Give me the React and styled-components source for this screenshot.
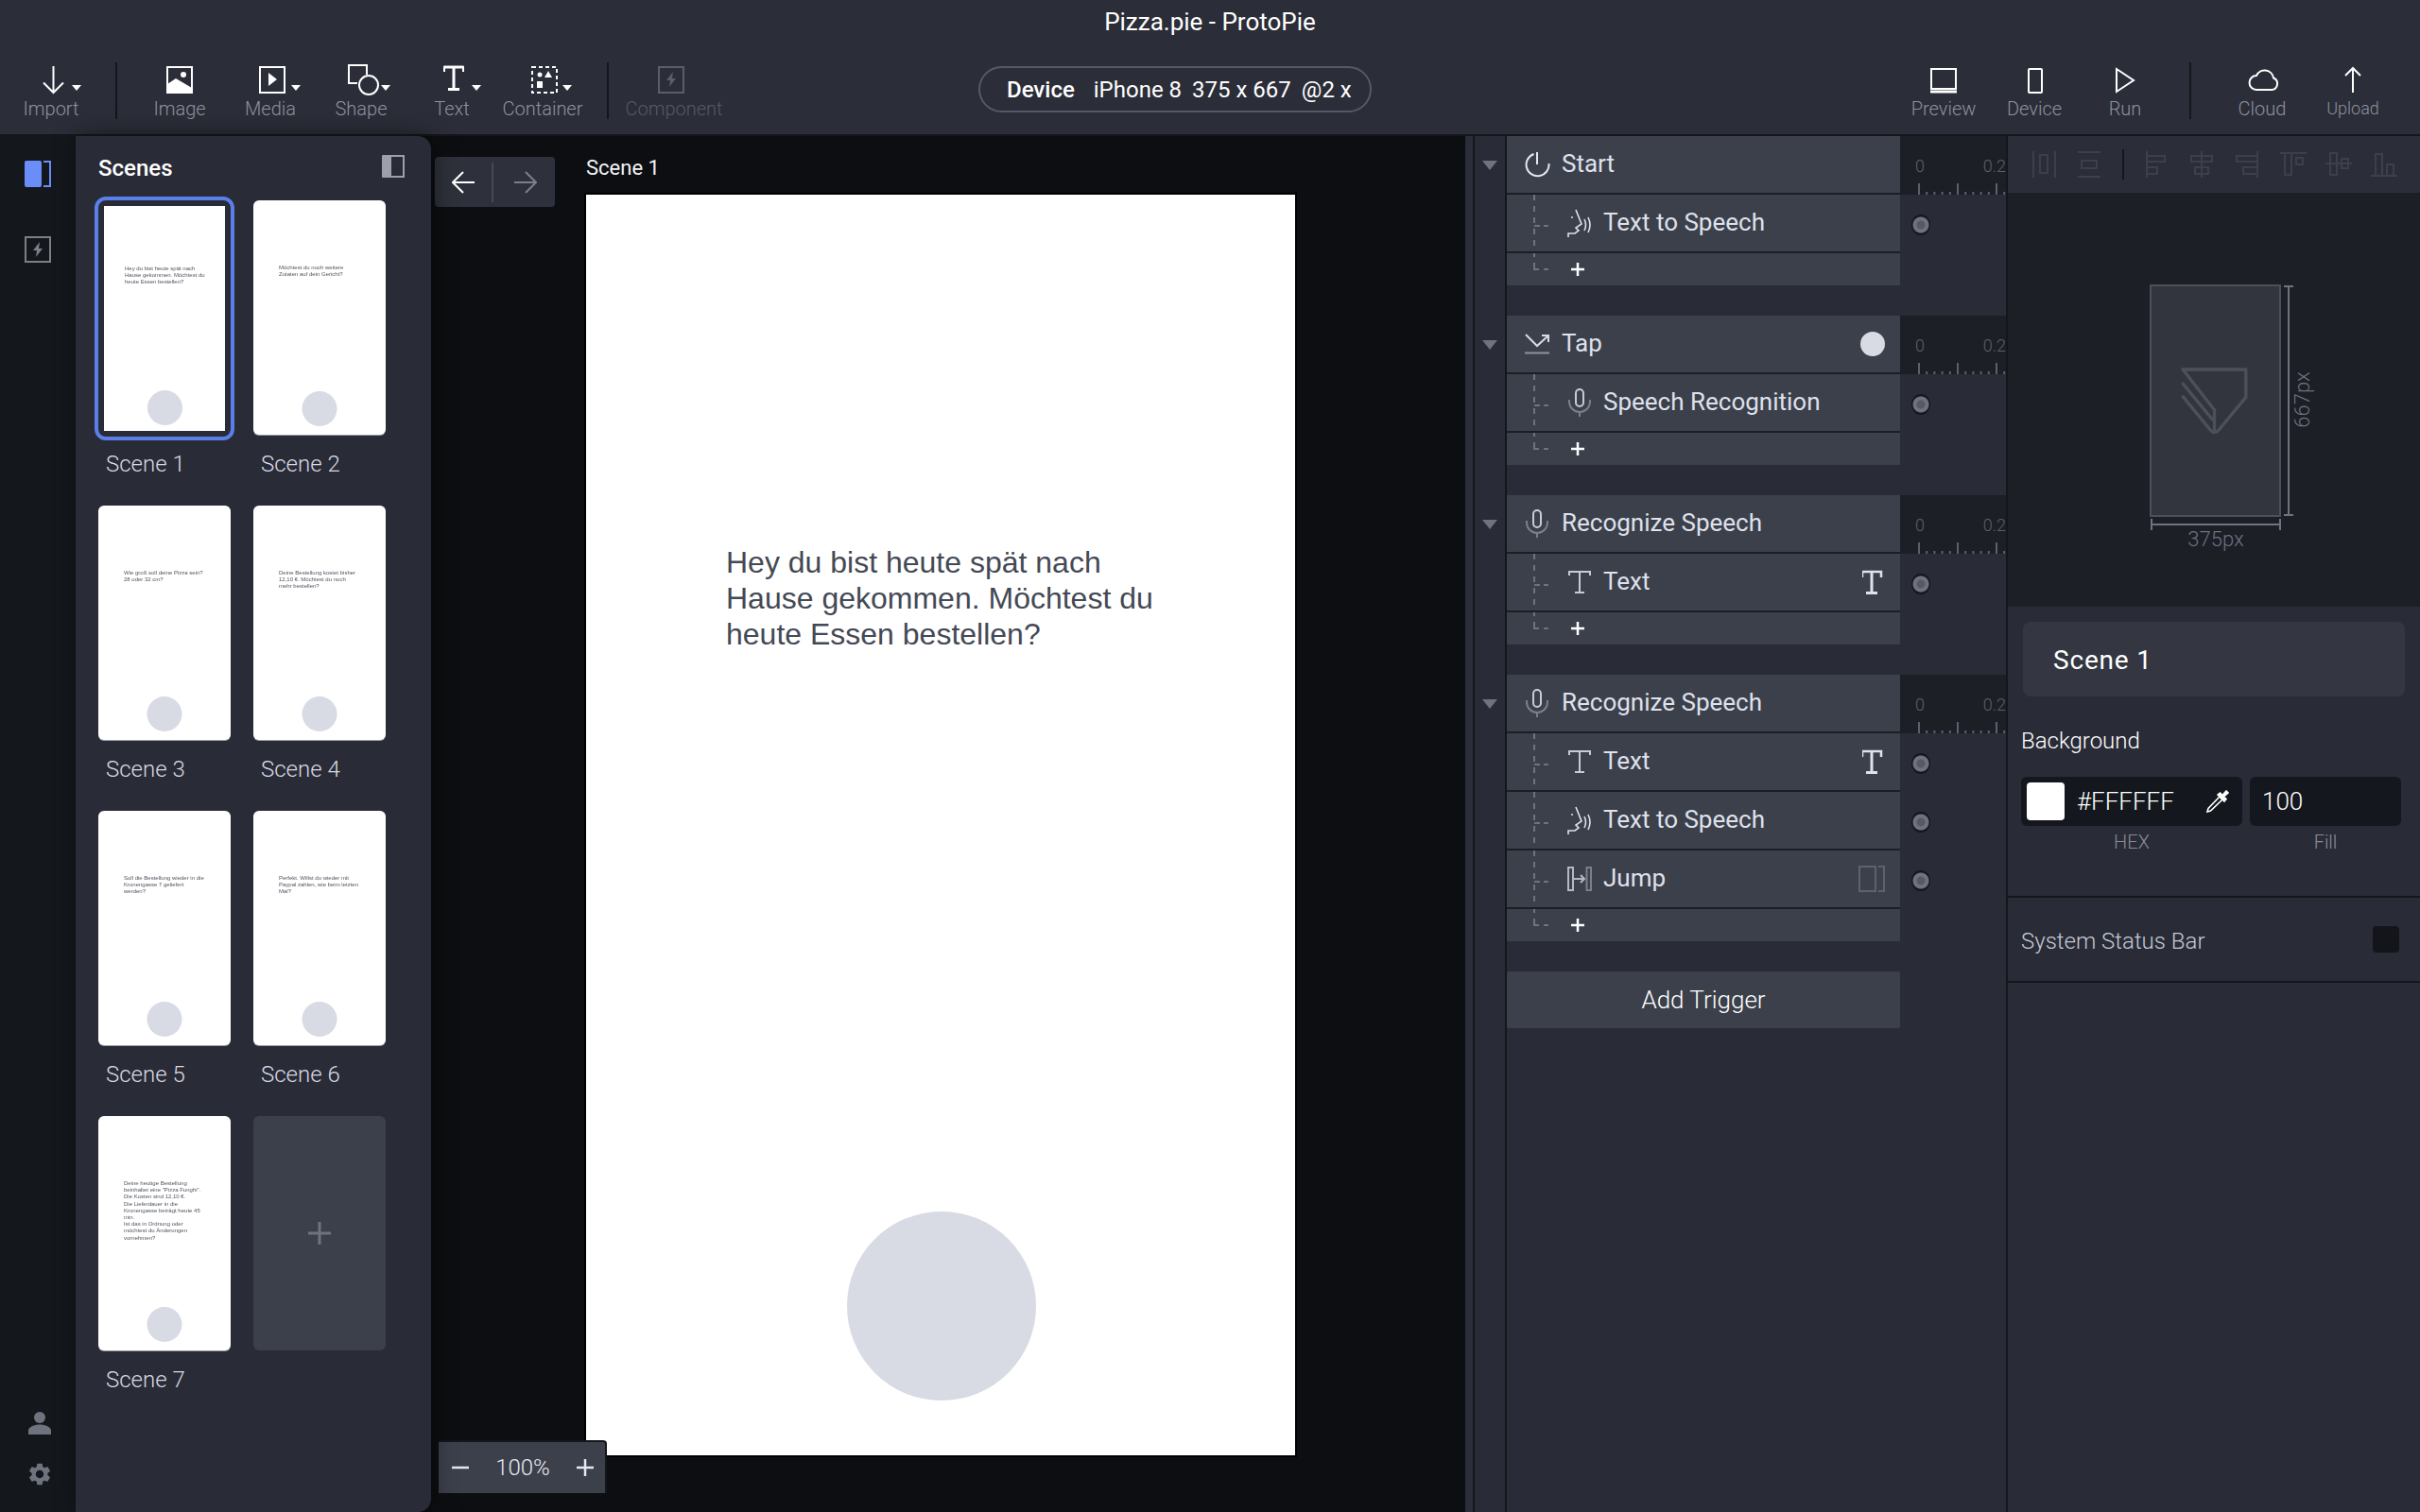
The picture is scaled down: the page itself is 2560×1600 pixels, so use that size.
import React from "react";
import styled, { createGlobalStyle } from "styled-components";
import { MdSettings } from "react-icons/md";

const C = {
  bar: "#2b2d38",
  panel: "#292b36",
  line: "#14161b",
  row: "#3b404b",
  rowLine: "#1c1e25",
  deep: "#1c1f26",
  text: "#dfe1eb",
  label: "#8e929e",
};

const Global = createGlobalStyle`
  html, body { margin: 0; padding: 0; background: #0d0e11; }
  #root { width: 2560px; height: 1600px; overflow: hidden; }
  * { box-sizing: border-box; }
  body { font-family: Roboto, "Liberation Sans", sans-serif; color: #fff; }
  svg { display: block; flex: none; }
`;

const Page = styled.div`
  width: 2560px;
  height: 1600px;
  display: flex;
  flex-direction: column;
`;

/* ---------- top bar ---------- */
const TopBar = styled.header`
  height: 144px;
  flex: none;
  background: ${C.bar};
  border-bottom: 2px solid ${C.line};
  display: flex;
  flex-direction: column;
`;
const Title = styled.div`
  height: 46px;
  line-height: 46px;
  text-align: center;
  font-size: 26px;
  color: #fff;
`;
const Toolbar = styled.div`
  margin-top: 20px;
  height: 62px;
  padding-left: 6px;
  padding-right: 23px;
  display: flex;
  align-items: flex-start;
`;
const ToolItem = styled.div`
  width: ${(p) => (p.$wide ? 102 : 96)}px;
  padding-top: 2px;
  flex: none;
  display: flex;
  flex-direction: column;
  align-items: center;
`;
const ToolLabel = styled.span`
  height: 24px;
  line-height: 22px;
  font-size: ${(p) => p.$size || 20}px;
  font-weight: 300;
  white-space: nowrap;
  color: ${(p) => (p.$dim ? "#565964" : C.label)};
`;
const ToolDivider = styled.div`
  width: 2px;
  height: 60px;
  flex: none;
  background: ${C.line};
  margin: 0 ${(p) => p.$right ?? 18}px 0 20px;
`;
const DevicePill = styled.div`
  margin: 4px auto 0 271px;
  width: 416px;
  height: 49px;
  flex: none;
  border: 2px solid #555a66;
  border-radius: 25px;
  padding-left: 28px;
  display: flex;
  align-items: center;
  gap: 11px;
  font-size: 24px;
  white-space: nowrap;
`;
const PillStrong = styled.b`
  font-weight: 500;
  margin-right: 9px;
`;

/* ---------- body ---------- */
const Body = styled.div`
  flex: 1;
  min-height: 0;
  display: flex;
`;
const Rail = styled.nav`
  width: 80px;
  flex: none;
  background: #14171c;
  display: flex;
  flex-direction: column;
  align-items: center;
  padding: 26px 0 26px;
`;
const RailSpacer = styled.div`
  flex: 1;
`;
const RailGap = styled.div`
  height: ${(p) => p.$h}px;
  flex: none;
`;
const RailFoot = styled.div`
  margin-left: 3px;
`;
const ScenesPanel = styled.aside`
  width: 376px;
  flex: none;
  background: ${C.panel};
  border-radius: 0 14px 14px 0;
  box-shadow: 2px 0 26px rgba(0, 0, 0, 0.45);
  padding: 0 24px;
  position: relative;
  z-index: 3;
`;
const ScenesHead = styled.div`
  height: 68px;
  display: flex;
  align-items: flex-start;
  justify-content: space-between;
  padding: 20px 4px 0 0;
  font-size: 24px;
  font-weight: 500;
  line-height: 28px;
`;
const SceneGrid = styled.div`
  display: grid;
  grid-template-columns: 140px 140px;
  column-gap: 24px;
  row-gap: 27px;
`;
const SceneCard = styled.div`
  display: flex;
  flex-direction: column;
`;
const ThumbFrame = styled.div`
  height: 248px;
  width: 140px;
  ${(p) =>
    p.$selected
      ? `margin: -4px; width: 148px; height: 258px; border: 4px solid #5b7fe9; border-radius: 12px; padding: 6px; margin-bottom: -6px;`
      : ""}
`;
const Thumb = styled.div`
  width: 100%;
  height: 100%;
  background: #fff;
  border-radius: ${(p) => (p.$selected ? 0 : 6)}px;
  box-shadow: ${(p) => (p.$selected ? "none" : "0 1px 0 #9a9ca6")};
  display: flex;
  flex-direction: column;
  padding: ${(p) => (p.$selected ? "62.5px 0 6px 22px" : "68px 0 9.5px 27px")};
`;
const ThumbText = styled.div`
  font-family: "Liberation Sans", Arial, sans-serif;
  font-size: 6px;
  line-height: 7.2px;
  color: #50555f;
  white-space: nowrap;
  filter: blur(0.35px);
`;
const ThumbDot = styled.div`
  margin-top: auto;
  width: 37px;
  height: 37px;
  border-radius: 50%;
  background: #d8dae4;
  align-self: center;
  transform: translateX(${(p) => (p.$selected ? -11 : -13.5)}px);
`;
const SceneLabel = styled.div`
  margin-top: 14px;
  height: 34px;
  line-height: 34px;
  padding-left: 8px;
  font-size: 24px;
  font-weight: 300;
  color: #d8dae4;
`;
const AddTile = styled.div`
  width: 140px;
  height: 248px;
  background: ${C.row};
  border-radius: 6px;
  display: flex;
  align-items: center;
  justify-content: center;
`;

/* ---------- canvas ---------- */
const Canvas = styled.main`
  flex: 1;
  min-width: 0;
  background: #0d0e11;
  display: flex;
  position: relative;
  padding-left: 4px;
`;
const NavBox = styled.div`
  margin-top: 22px;
  width: 127px;
  height: 53px;
  flex: none;
  background: #2e313b;
  border-radius: 4px;
  display: flex;
  align-items: center;
  padding-left: 18px;
`;
const NavDivider = styled.div`
  width: 2px;
  height: 42px;
  background: #454954;
  margin: 0 22px 0 18px;
`;
const Stage = styled.div`
  margin-left: 33px;
  display: flex;
  flex-direction: column;
`;
const StageLabel = styled.div`
  height: 62px;
  line-height: 68px;
  font-size: 22px;
  color: #f2f3f7;
`;
const Phone = styled.div`
  width: 750px;
  height: 1334px;
  background: #fff;
  box-shadow: 0 0 0 2px #000;
  padding: 0 0 58px 148px;
  display: flex;
  flex-direction: column;
`;
const PhoneText = styled.div`
  margin-top: 370px;
  font-family: "Liberation Sans", Arial, sans-serif;
  font-size: 32px;
  line-height: 38px;
  color: #444954;
  white-space: nowrap;
`;
const PhoneDot = styled.div`
  margin-top: auto;
  margin-left: 128px;
  width: 200px;
  height: 200px;
  border-radius: 50%;
  background: #d8dae4;
`;
const ZoomBox = styled.div`
  position: absolute;
  left: 8px;
  top: 1380px;
  width: 178px;
  height: 56px;
  background: ${C.row};
  border: 2px solid ${C.line};
  border-left: 0;
  border-bottom: 0;
  border-radius: 0 4px 0 0;
  display: flex;
  align-items: center;
  justify-content: space-between;
  padding: 0 12px 0 14px;
  font-size: 24px;
  font-weight: 300;
  color: #e6e8f0;
`;

/* ---------- interactions ---------- */
const Interactions = styled.section`
  width: 574px;
  flex: none;
  background: ${C.panel};
  display: flex;
`;
const Strip = styled.div`
  width: 10px;
  flex: none;
  background: ${C.bar};
  border-right: 2px solid ${C.line};
`;
const List = styled.div`
  margin-left: 32px;
  width: 532px;
  flex: none;
  border-left: 2px solid ${C.line};
  border-right: 2px solid ${C.line};
`;
const Group = styled.div`
  margin-bottom: 32px;
  position: relative;
`;
const Caret = styled.div`
  position: absolute;
  left: -26px;
  top: 26px;
  width: 0;
  height: 0;
  border-left: 8px solid transparent;
  border-right: 8px solid transparent;
  border-top: 10px solid #6e737e;
`;
const Row = styled.div`
  display: flex;
  height: ${(p) => (p.$plus ? 34 : 62)}px;
`;
const RowMain = styled.div`
  width: 416px;
  flex: none;
  background: ${C.row};
  border-bottom: ${(p) => (p.$plus ? "0" : `2px solid ${C.rowLine}`)};
  display: flex;
  align-items: center;
  font-size: 26px;
  color: ${C.text};
  padding-left: ${(p) => (p.$head ? 18 : 28)}px;
  white-space: nowrap;
`;
const RowText = styled.span`
  margin-top: -3px;
`;
const HeadIcon = styled.div`
  width: 28px;
  flex: none;
  display: flex;
  justify-content: center;
  margin-right: 12px;
`;
const RespIcon = styled.div`
  width: 28px;
  flex: none;
  margin: 0 11px 0 17px;
  display: flex;
  justify-content: center;
`;
const PlusSlot = styled.div`
  margin-left: 22px;
`;
const RightSlot = styled.div`
  margin-left: auto;
  padding-right: 16px;
`;
const TimeCell = styled.div`
  width: 112px;
  flex: none;
  overflow: hidden;
  display: flex;
  flex-direction: column;
  justify-content: center;
  padding-left: 13px;
  background: ${(p) => (p.$head ? C.deep : "transparent")};
`;
const RulerCell = styled(TimeCell)`
  padding: 0;
  justify-content: space-between;
`;
const RulerLabels = styled.div`
  padding: 20px 0 0 16px;
  display: flex;
  justify-content: space-between;
  font-size: 18px;
  line-height: 24px;
  font-weight: 300;
  color: #5c606c;
`;
const Dot = styled.div`
  width: 18px;
  height: 20px;
  border-radius: 50%;
  margin-top: 2px;
  background: radial-gradient(circle, #555a66 0 4px, #6e737e 5px 8px, #14161b 9px);
  box-shadow: 0 0 0 1px #14161b;
`;
const AddTrigger = styled.div`
  width: 416px;
  height: 60px;
  background: ${C.row};
  border-radius: 2px;
  display: flex;
  align-items: center;
  justify-content: center;
  font-size: 26px;
  font-weight: 300;
  color: #fff;
`;

/* ---------- properties ---------- */
const Props = styled.aside`
  width: 436px;
  flex: none;
  background: ${C.panel};
  display: flex;
  flex-direction: column;
`;
const AlignBar = styled.div`
  height: 60px;
  background: ${C.bar};
  display: flex;
  align-items: center;
  padding-left: 24px;
  gap: 20px;
`;
const AlignDivider = styled.div`
  width: 2px;
  height: 32px;
  background: ${C.line};
  margin: 0 1px;
`;
const PreviewArea = styled.div`
  height: 438px;
  background: ${C.deep};
  display: flex;
  align-items: center;
  justify-content: center;
  padding-top: 2px;
`;
const PreviewPhone = styled.div`
  width: 139px;
  height: 246px;
  margin-left: 3px;
  background: #32353e;
  border: 2px solid #4c505b;
  position: relative;
  display: flex;
  align-items: center;
  justify-content: center;
`;
const MeasureV = styled.div`
  position: absolute;
  left: 140px;
  top: -1px;
  width: 10px;
  height: 244px;
`;
const MeasureH = styled.div`
  position: absolute;
  left: -1px;
  top: 246px;
  width: 138px;
  height: 12px;
`;
const MeasureText = styled.span`
  position: absolute;
  font-size: 22px;
  font-weight: 300;
  line-height: 24px;
  color: #6e7280;
  white-space: nowrap;
  ${(p) =>
    p.$vertical
      ? `left: 160px; top: 108px; transform: translate(-50%, 0) rotate(-90deg);`
      : `left: 68px; top: 256px; transform: translateX(-50%);`}
`;
const PropsBody = styled.div`
  padding: 16px 0 0 14px;
  height: 308px;
  border-bottom: 2px solid ${C.line};
`;
const SceneField = styled.div`
  margin-left: 2px;
  width: 404px;
  height: 79px;
  background: #343741;
  border-radius: 8px;
  display: flex;
  align-items: center;
  padding: 2px 0 0 32px;
  font-size: 28px;
  letter-spacing: 0.8px;
`;
const BgLabel = styled.div`
  margin: 35px 0 0 0;
  height: 24px;
  line-height: 24px;
  font-size: 24px;
  font-weight: 300;
`;
const ColorRow = styled.div`
  margin-top: 26px;
  display: grid;
  grid-template-columns: 234px 160px;
  column-gap: 8px;
  row-gap: 5px;
`;
const InputBox = styled.div`
  height: 52px;
  background: #14171e;
  border-radius: 6px;
  display: flex;
  align-items: center;
  padding: 0 14px 0 ${(p) => p.$pl}px;
  font-size: 26px;
  font-weight: 300;
`;
const Swatch = styled.div`
  width: 40px;
  height: 40px;
  background: #fff;
  border-radius: 4px;
  margin-right: 13px;
`;
const Picker = styled.div`
  margin-left: auto;
`;
const Caption = styled.div`
  text-align: center;
  font-size: 20px;
  font-weight: 300;
  line-height: 24px;
  color: #888c98;
`;
const StatusRow = styled.div`
  height: 90px;
  border-bottom: 2px solid ${C.line};
  display: flex;
  align-items: center;
  justify-content: space-between;
  padding: 0 22px 0 14px;
  font-size: 24px;
  font-weight: 300;
  color: #c4c8d4;
`;
const StatusText = styled.span`
  margin-top: 3px;
`;
const StatusSwatch = styled.div`
  width: 28px;
  height: 28px;
  background: #14151a;
  border-radius: 4px;
`;

/* ---------- icons ---------- */
const Svg = ({ w = 96, h = 36, c = "#fff", sw = 2, children, vb }) => (
  <svg width={w} height={h} viewBox={vb || `0 0 ${w} ${h}`} fill="none" stroke={c} strokeWidth={sw}>
    {children}
  </svg>
);
const Car = ({ x }) => <polygon points={`${x},22 ${x + 10},22 ${x + 5},28`} fill="#fff" stroke="none" />;

const IconImport = () => (
  <Svg>
    <path d="M50.5 2V30M40 19.5L50.5 30L61 19.5" />
    <Car x={70} />
  </Svg>
);
const IconImage = () => (
  <Svg>
    <rect x="35" y="3" width="26" height="27" />
    <circle cx="52" cy="11" r="3" fill="#fff" stroke="none" />
    <polygon points="35,21 44,15 61,25 61,30 35,30" fill="#fff" stroke="none" />
  </Svg>
);
const IconMedia = () => (
  <Svg>
    <rect x="37" y="3" width="26" height="27" />
    <polygon points="46,9 55,16 46,23" fill="#fff" stroke="none" />
    <Car x={70} />
  </Svg>
);
const IconShape = () => (
  <Svg>
    <path d="M44 20H35V1H54V11" />
    <circle cx="56" cy="22" r="10" />
    <Car x={69} />
  </Svg>
);
const IconText = () => (
  <Svg>
    <path d="M50 3V26M44 26.500H56" strokeWidth="3" />
    <path d="M39.500 3H60.500" strokeWidth="3" />
    <path d="M40 2V8M60 2V8" strokeWidth="2" />
    <Car x={69} />
  </Svg>
);
const IconContainer = () => (
  <Svg>
    <rect x="37" y="3" width="26" height="27" strokeDasharray="4 3" />
    <circle cx="45" cy="11" r="2.500" fill="#fff" stroke="none" />
    <polygon points="54,7 58,14 50,14" fill="#fff" stroke="none" />
    <rect x="42" y="18" width="6" height="7" fill="#fff" stroke="none" />
    <Car x={69} />
  </Svg>
);
const Bolt = ({ cx, cy, c }) => (
  <polygon
    points={`${cx + 2},${cy - 8} ${cx - 5},${cy + 1} ${cx - 1},${cy + 1} ${cx - 2},${cy + 8} ${cx + 5},${cy - 1} ${cx + 1},${cy - 1}`}
    fill={c}
    stroke="none"
  />
);
const IconComponent = () => (
  <Svg c="#5b5e69">
    <rect x="32" y="3" width="26" height="27" />
    <Bolt cx={45} cy={16} c="#5b5e69" />
  </Svg>
);
const IconPreview = () => (
  <Svg>
    <rect x="35" y="5" width="26" height="21" />
    <path d="M34 29H62" strokeWidth="3" />
  </Svg>
);
const IconDevice = () => (
  <Svg>
    <rect x="42" y="5" width="14" height="25" rx="1" />
  </Svg>
);
const IconRun = () => (
  <Svg>
    <path d="M39 5L57 17L39 29Z" />
  </Svg>
);
const IconCloud = () => (
  <Svg>
    <path d="M42 27H58A6.500 6.500 0 0 0 60 14.500A9.500 9.500 0 0 0 42 12A7.500 7.500 0 0 0 42 27Z" />
  </Svg>
);
const IconUpload = () => (
  <Svg>
    <path d="M48 4V30M40 12L48 4L56 12" />
  </Svg>
);

const IconRailPanel = () => (
  <Svg w={28} h={28} c="#6a8df8">
    <rect x="0" y="0" width="18" height="28" rx="2" fill="#6a8df8" stroke="none" />
    <path d="M20 1H27V27H20" />
  </Svg>
);
const IconRailBolt = () => (
  <Svg w={28} h={28} c="#7b7f8a">
    <rect x="1" y="1" width="26" height="26" />
    <Bolt cx={14} cy={14} c="#7b7f8a" />
  </Svg>
);
const IconUser = () => (
  <Svg w={24} h={24} c="#6e737e">
    <circle cx="12" cy="6" r="6" fill="#6e737e" stroke="none" />
    <path d="M0 24V20C0 16 6 13.500 12 13.500C18 13.500 24 16 24 20V24Z" fill="#6e737e" stroke="none" />
  </Svg>
);
const IconPanelToggle = () => (
  <Svg w={24} h={24} c="#9ba0ab">
    <rect x="0" y="0" width="10" height="24" rx="1" fill="#9ba0ab" stroke="none" />
    <rect x="9" y="1" width="14" height="22" />
  </Svg>
);
const IconPlus = ({ s = 14, c = "#fff", sw = 2.5 }) => (
  <Svg w={s} h={s} c={c} sw={sw}>
    <path d={`M${s / 2} 0V${s}M0 ${s / 2}H${s}`} />
  </Svg>
);
const IconMinus = () => (
  <Svg w={18} h={18} c="#e6e8f0" sw={2.5}>
    <path d="M0 9H18" />
  </Svg>
);
const IconBack = ({ c = "#fff", flip }) => (
  <Svg w={24} h={24} c={c}>
    <path d={flip ? "M0 12H23M12 1L23 12L12 23" : "M24 12H1M12 1L1 12L12 23"} />
  </Svg>
);
const IconStart = () => (
  <Svg w={27} h={28} c="#e6e8f0">
    <path d="M13 1V14" />
    <path d="M9.500 3A12 12 0 1 0 25.500 13" />
  </Svg>
);
const IconTap = () => (
  <Svg w={26} h={22} c="#d8dae4">
    <path d="M1 1L13 13L25 2M18 2H25V9" />
    <path d="M0 20.500H26" stroke="#8e929e" />
  </Svg>
);
const IconMic = () => (
  <Svg w={24} h={30} c="#c8cbd6">
    <rect x="8" y="1" width="8" height="18" rx="4" />
    <path d="M1 12V14A11 11 0 0 0 23 14V12M12 25V30" stroke="#7b7f8a" />
  </Svg>
);
const IconTts = () => (
  <Svg w={26} h={30} c="#dfe1eb" sw={1.6}>
    <path d="M9 1L15 16L9 20L12 23L8 26H1V30" />
    <circle cx="5" cy="9" r="1" fill="#dfe1eb" stroke="none" />
    <path d="M18 11Q21 17 18 23M22 9Q26 17 22 25" />
  </Svg>
);
const IconTextThin = () => (
  <Svg w={24} h={24} c="#c8cbd6">
    <path d="M1 5V1H23V5M12 1V23M7 23H17" />
  </Svg>
);
const IconTextBold = () => (
  <Svg w={24} h={26} c="#dfe1eb">
    <path d="M10 2V24M4 24.500H16" strokeWidth="3" />
    <path d="M0 8V2H20V8" strokeWidth="2.500" />
  </Svg>
);
const IconJump = () => (
  <Svg w={26} h={26} c="#b5b8c4" sw={2}>
    <rect x="1" y="1" width="5" height="24" />
    <rect x="20.500" y="1" width="4.500" height="24" stroke="#7b7f8a" />
    <path d="M6 13H18M14 9L18 13L14 17" />
  </Svg>
);
const IconJumpTarget = () => (
  <Svg w={28} h={28} c="#5e626d">
    <rect x="1" y="1" width="17" height="26" />
    <path d="M21 1H27V27H21" />
  </Svg>
);
const Tree = ({ plus }) =>
  plus ? (
    <Svg w={18} h={34} c="#6e737e">
      <path d="M1 0V4M1 10V17H6M11 17H16" />
    </Svg>
  ) : (
    <Svg w={18} h={60} c="#6e737e">
      <path d="M1 0V60" strokeDasharray="6 6" />
      <path d="M1 33H16" strokeDasharray="6 4" />
    </Svg>
  );
const Ruler = () => {
  const ticks = [];
  for (let i = 0; i < 12; i++) {
    const x = 20 + i * 8.2;
    ticks.push(<path key={i} d={`M${x} ${i % 5 === 0 ? 0 : 9}V12`} />);
  }
  return (
    <Svg w={112} h={12} c="#5c606c">
      {ticks}
    </Svg>
  );
};
const a = "#3c404a";
const AlignIcon = ({ children }) => (
  <Svg w={28} h={28} c={a}>
    {children}
  </Svg>
);
const alignIcons = [
  <path key="1" d="M3 0V28M26 0V28M10 4H18V23H10Z" />,
  <path key="2" d="M2 1H26M2 27H26M6 10H22V18H6Z" />,
  <path key="3" d="M3 0V28M3 5H22V11H3M3 17H14V24H3" />,
  <path key="4" d="M13 0V28M2 5H24V11H2ZM6 17H20V24H6Z" />,
  <path key="5" d="M24 0V28M24 5H2V11H24M24 17H9V24H24" />,
  <path key="6" d="M0 2H28M5 2V25H12V2M17 7H24V14H17Z" />,
  <path key="7" d="M0 13H28M5 2H12V25H5ZM17 8H24V18H17Z" />,
  <path key="8" d="M0 26H28M5 26V3H12V26M17 26V14H24V26" />,
];
const Logo = () => (
  <Svg w={77} h={75} vb="560 740 230 225" c="#4c505b" sw={10}>
    <path d="M572 752H772V840L685 945Q672 958 660 945L572 838" strokeLinejoin="round" strokeLinecap="round" />
    <path d="M572 752L672 880V950M572 797L665 910" strokeLinejoin="round" strokeLinecap="round" />
  </Svg>
);
const MeasureVLine = () => (
  <Svg w={10} h={244} c="#6e737e">
    <path d="M0 1H10M0 243H10M5 1V243" />
  </Svg>
);
const MeasureHLine = () => (
  <Svg w={138} h={12} c="#6e737e">
    <path d="M1 0V12M137 0V12M1 6H137" />
  </Svg>
);
const Dropper = () => (
  <Svg w={24} h={24} c="#fff" sw={1.6}>
    <path d="M14 7L2 19.500L1 23L4.500 22L17 10Z" />
    <path d="M12 5L19 12L21 9.500L18.500 7L23 3L21 1L17 5.500L14.500 3Z" fill="#fff" />
  </Svg>
);

/* ---------- data ---------- */
const scenes = [
  { n: 1, t: ["Hey du bist heute spät nach", "Hause gekommen. Möchtest du", "heute Essen bestellen?"] },
  { n: 2, t: ["Möchtest du noch weitere", "Zutaten auf dein Gericht?"] },
  { n: 3, t: ["Wie groß soll deine Pizza sein?", "28 oder 32 cm?"] },
  { n: 4, t: ["Deine Bestellung kostet bisher", "12,10 €. Möchtest du noch", "mehr bestellen?"] },
  { n: 5, t: ["Soll die Bestellung wieder in die", "Kronengasse 7 geliefert", "werden?"] },
  { n: 6, t: ["Perfekt. Willst du wieder mit", "Paypal zahlen, wie beim letzten", "Mal?"] },
  {
    n: 7,
    t: [
      "Deine heutige Bestellung",
      'beinhaltet eine "Pizza Funghi".',
      "Die Kosten sind 12,10 €.",
      "Die Lieferdauer in die",
      "Kronengasse beträgt heute 45",
      "min.",
      "Ist das in Ordnung oder",
      "möchtest du Änderungen",
      "vornehmen?",
    ],
  },
];

const groups = [
  {
    icon: <IconStart />,
    name: "Start",
    rows: [{ icon: <IconTts />, name: "Text to Speech" }],
  },
  {
    icon: <IconTap />,
    name: "Tap",
    mark: true,
    rows: [{ icon: <IconMic />, name: "Speech Recognition" }],
  },
  {
    icon: <IconMic />,
    name: "Recognize Speech",
    rows: [{ icon: <IconTextThin />, name: "Text", right: <IconTextBold /> }],
  },
  {
    icon: <IconMic />,
    name: "Recognize Speech",
    rows: [
      { icon: <IconTextThin />, name: "Text", right: <IconTextBold /> },
      { icon: <IconTts />, name: "Text to Speech" },
      { icon: <IconJump />, name: "Jump", right: <IconJumpTarget /> },
    ],
  },
];

const TapMark = styled.div`
  width: 26px;
  height: 26px;
  border-radius: 50%;
  background: #d8dae4;
`;

export default function App() {
  return (
    <Page>
      <Global />
      <TopBar>
        <Title>Pizza.pie - ProtoPie</Title>
        <Toolbar>
          <ToolItem>
            <IconImport />
            <ToolLabel>Import</ToolLabel>
          </ToolItem>
          <ToolDivider />
          <ToolItem>
            <IconImage />
            <ToolLabel>Image</ToolLabel>
          </ToolItem>
          <ToolItem>
            <IconMedia />
            <ToolLabel>Media</ToolLabel>
          </ToolItem>
          <ToolItem>
            <IconShape />
            <ToolLabel>Shape</ToolLabel>
          </ToolItem>
          <ToolItem>
            <IconText />
            <ToolLabel>Text</ToolLabel>
          </ToolItem>
          <ToolItem>
            <IconContainer />
            <ToolLabel>Container</ToolLabel>
          </ToolItem>
          <ToolDivider />
          <ToolItem $wide>
            <IconComponent />
            <ToolLabel $dim>Component</ToolLabel>
          </ToolItem>
          <DevicePill>
            <PillStrong>Device</PillStrong>
            <span>iPhone 8</span>
            <span>375 x 667</span>
            <span>@2 x</span>
          </DevicePill>
          <ToolItem>
            <IconPreview />
            <ToolLabel>Preview</ToolLabel>
          </ToolItem>
          <ToolItem>
            <IconDevice />
            <ToolLabel>Device</ToolLabel>
          </ToolItem>
          <ToolItem>
            <IconRun />
            <ToolLabel>Run</ToolLabel>
          </ToolItem>
          <ToolDivider $right={27} />
          <ToolItem>
            <IconCloud />
            <ToolLabel>Cloud</ToolLabel>
          </ToolItem>
          <ToolItem>
            <IconUpload />
            <ToolLabel $size={18}>Upload</ToolLabel>
          </ToolItem>
        </Toolbar>
      </TopBar>

      <Body>
        <Rail>
          <IconRailPanel />
          <RailGap $h={52} />
          <IconRailBolt />
          <RailSpacer />
          <RailFoot>
            <IconUser />
          </RailFoot>
          <RailGap $h={28} />
          <RailFoot>
            <MdSettings size={28} color="#6e737e" />
          </RailFoot>
        </Rail>

        <ScenesPanel>
          <ScenesHead>
            Scenes
            <IconPanelToggle />
          </ScenesHead>
          <SceneGrid>
            {scenes.map((s) => {
              const selected = s.n === 1;
              return (
                <SceneCard key={s.n}>
                  <ThumbFrame $selected={selected}>
                    <Thumb $selected={selected}>
                      <ThumbText>
                        {s.t.map((l) => (
                          <div key={l}>{l}</div>
                        ))}
                      </ThumbText>
                      <ThumbDot $selected={selected} />
                    </Thumb>
                  </ThumbFrame>
                  <SceneLabel>Scene {s.n}</SceneLabel>
                </SceneCard>
              );
            })}
            <AddTile>
              <IconPlus s={24} c="#6e737e" sw={3} />
            </AddTile>
          </SceneGrid>
        </ScenesPanel>

        <Canvas>
          <NavBox>
            <IconBack />
            <NavDivider />
            <IconBack flip c="#7b7f8a" />
          </NavBox>
          <Stage>
            <StageLabel>Scene 1</StageLabel>
            <Phone>
              <PhoneText>
                Hey du bist heute spät nach
                <br />
                Hause gekommen. Möchtest du
                <br />
                heute Essen bestellen?
              </PhoneText>
              <PhoneDot />
            </Phone>
          </Stage>
          <ZoomBox>
            <IconMinus />
            <span>100%</span>
            <IconPlus s={18} c="#e6e8f0" sw={2.5} />
          </ZoomBox>
        </Canvas>

        <Interactions>
          <Strip />
          <List>
            {groups.map((g, i) => (
              <Group key={i}>
                <Caret />
                <Row>
                  <RowMain $head>
                    <HeadIcon>{g.icon}</HeadIcon>
                    <RowText>{g.name}</RowText>
                    {g.mark && (
                      <RightSlot>
                        <TapMark />
                      </RightSlot>
                    )}
                  </RowMain>
                  <RulerCell $head>
                    <RulerLabels>
                      <span>0</span>
                      <span>0.2</span>
                    </RulerLabels>
                    <Ruler />
                  </RulerCell>
                </Row>
                {g.rows.map((r, j) => (
                  <Row key={j}>
                    <RowMain>
                      <Tree />
                      <RespIcon>{r.icon}</RespIcon>
                      <RowText>{r.name}</RowText>
                      {r.right && <RightSlot>{r.right}</RightSlot>}
                    </RowMain>
                    <TimeCell>
                      <Dot />
                    </TimeCell>
                  </Row>
                ))}
                <Row $plus>
                  <RowMain $plus>
                    <Tree plus />
                    <PlusSlot>
                      <IconPlus />
                    </PlusSlot>
                  </RowMain>
                </Row>
              </Group>
            ))}
            <AddTrigger>Add Trigger</AddTrigger>
          </List>
        </Interactions>

        <Props>
          <AlignBar>
            <AlignIcon>{alignIcons[0]}</AlignIcon>
            <AlignIcon>{alignIcons[1]}</AlignIcon>
            <AlignDivider />
            {alignIcons.slice(2).map((ic, i) => (
              <AlignIcon key={i}>{ic}</AlignIcon>
            ))}
          </AlignBar>
          <PreviewArea>
            <PreviewPhone>
              <Logo />
              <MeasureV>
                <MeasureVLine />
              </MeasureV>
              <MeasureH>
                <MeasureHLine />
              </MeasureH>
              <MeasureText $vertical>667px</MeasureText>
              <MeasureText>375px</MeasureText>
            </PreviewPhone>
          </PreviewArea>
          <PropsBody>
            <SceneField>Scene 1</SceneField>
            <BgLabel>Background</BgLabel>
            <ColorRow>
              <InputBox $pl={6}>
                <Swatch />
                #FFFFFF
                <Picker>
                  <Dropper />
                </Picker>
              </InputBox>
              <InputBox $pl={13}>100</InputBox>
              <Caption>HEX</Caption>
              <Caption>Fill</Caption>
            </ColorRow>
          </PropsBody>
          <StatusRow>
            <StatusText>System Status Bar</StatusText>
            <StatusSwatch />
          </StatusRow>
        </Props>
      </Body>
    </Page>
  );
}
